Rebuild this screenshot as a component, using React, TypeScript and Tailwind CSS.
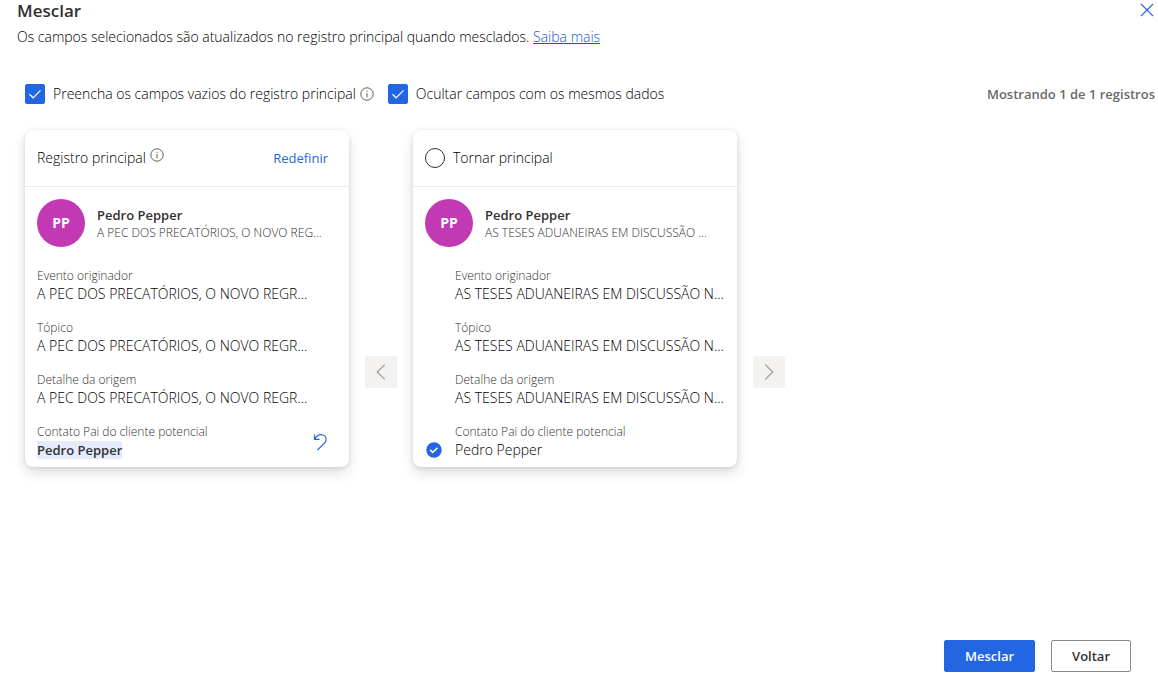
import { useId } from 'react';

interface Field {
  label: string;
  value: string;
}

interface MergeRecord {
  name: string;
  subtitle: string;
  fields: Field[];
}

const primaryRecord: MergeRecord = {
  name: 'Pedro Pepper',
  subtitle: 'A PEC DOS PRECATÓRIOS, O NOVO REG...',
  fields: [
    { label: 'Evento originador', value: 'A PEC DOS PRECATÓRIOS, O NOVO REGR...' },
    { label: 'Tópico', value: 'A PEC DOS PRECATÓRIOS, O NOVO REGR...' },
    { label: 'Detalhe da origem', value: 'A PEC DOS PRECATÓRIOS, O NOVO REGR...' },
  ],
};

const secondaryRecord: MergeRecord = {
  name: 'Pedro Pepper',
  subtitle: 'AS TESES ADUANEIRAS EM DISCUSSÃO ...',
  fields: [
    { label: 'Evento originador', value: 'AS TESES ADUANEIRAS EM DISCUSSÃO N...' },
    { label: 'Tópico', value: 'AS TESES ADUANEIRAS EM DISCUSSÃO N...' },
    { label: 'Detalhe da origem', value: 'AS TESES ADUANEIRAS EM DISCUSSÃO N...' },
  ],
};

function InfoIcon() {
  return (
    <svg viewBox="0 0 14 14" className="w-3.5 h-3.5 shrink-0 text-[#605e5c]" fill="none" stroke="currentColor">
      <circle cx="7" cy="7" r="6.2" strokeWidth="1" />
      <path d="M7 6v4.2M7 3.8v1.1" strokeWidth="1" />
    </svg>
  );
}

function OptionCheckbox({ label }: { label: string }) {
  const id = useId();

  return (
    <div className="flex items-center gap-2">
      <span className="relative flex">
        <input
          id={id}
          type="checkbox"
          defaultChecked
          className="peer appearance-none w-5 h-5 rounded-xs border border-[#323130] checked:border-[#2266e3] checked:bg-[#2266e3]"
        />
        <svg
          viewBox="0 0 20 20"
          className="absolute inset-0 w-5 h-5 pointer-events-none invisible peer-checked:visible"
          fill="none"
          stroke="white"
          strokeWidth="1.2"
        >
          <path d="M4.5 10.3l3.6 3.5 7.4-7.4" />
        </svg>
      </span>
      <label htmlFor={id}>{label}</label>
    </div>
  );
}

function RecordHeading({ record }: { record: MergeRecord }) {
  return (
    <div className="flex items-center gap-3 px-3 pt-3">
      <div className="flex items-center justify-center w-12 h-12 rounded-full bg-[#c239b3] text-white font-bold">
        PP
      </div>
      <div className="whitespace-nowrap">
        <p className="text-[13px] leading-5 font-semibold text-[#323130]">{record.name}</p>
        <p className="text-xs text-[#323130]">{record.subtitle}</p>
      </div>
    </div>
  );
}

function FieldRow({ label, value }: Field) {
  return (
    <div className="whitespace-nowrap">
      <dt className="text-xs text-[#323130]">{label}</dt>
      <dd>{value}</dd>
    </div>
  );
}

function ArrowButton({ direction }: { direction: 'left' | 'right' }) {
  return (
    <button
      type="button"
      aria-label={direction === 'left' ? 'Anterior' : 'Próximo'}
      className="self-end flex items-center justify-center w-8 h-8 mx-4 mb-[79px] rounded-xs bg-[#f3f2f1] text-[#a19f9d]"
    >
      <svg viewBox="0 0 16 16" className="w-4 h-4" fill="none" stroke="currentColor" strokeWidth="1.3">
        <path d={direction === 'left' ? 'M11.7 .6L4.2 8l7.5 7.4' : 'M4.3 .6L11.8 8l-7.5 7.4'} />
      </svg>
    </button>
  );
}

const cardClass =
  'flex flex-col w-81 shrink-0 rounded-lg bg-white pb-[7px] shadow-[0_6px_14px_rgba(0,0,0,0.13),0_1px_4px_rgba(0,0,0,0.11)]';

export default function App() {
  return (
    <div className="flex flex-col min-h-screen bg-white text-black text-sm font-light font-['Open_Sans','Noto_Sans',sans-serif]">
      <header className="flex items-start justify-between pl-[17px]">
        <div>
          <h1 className="text-[17px] leading-[22px] font-semibold text-[#323130]">Mesclar</h1>
          <p className="mt-[5px]">
            Os campos selecionados são atualizados no registro principal quando mesclados.{' '}
            <a href="#saiba-mais" className="text-[#0f55d8] underline">
              Saiba mais
            </a>
          </p>
        </div>
        <button type="button" aria-label="Fechar" className="px-1 py-[3px] text-[#2266e3]">
          <svg viewBox="0 0 14 14" className="w-3.5 h-3.5" fill="none" stroke="currentColor" strokeWidth="1.1">
            <path d="M1 1l12 12M13 1L1 13" />
          </svg>
        </button>
      </header>

      <div className="flex items-center justify-between mt-[37px] pl-[25px] pr-[3px]">
        <div className="flex items-center gap-3.5">
          <div className="flex items-center gap-1">
            <OptionCheckbox label="Preencha os campos vazios do registro principal" />
            <InfoIcon />
          </div>
          <OptionCheckbox label="Ocultar campos com os mesmos dados" />
        </div>
        <span className="text-[13px] leading-5 font-semibold text-[#6b6967]">Mostrando 1 de 1 registros</span>
      </div>

      <main className="flex pl-[25px] mt-[26px]">
        <section className={cardClass}>
          <div className="flex items-center justify-between h-14 box-content px-3 border-b border-[#edebe9]">
            <div className="flex items-start gap-1">
              <span>Registro principal</span>
              <InfoIcon />
            </div>
            <button type="button" className="pr-[9px] text-[13px] leading-5 font-normal text-[#2266e3]">
              Redefinir
            </button>
          </div>
          <RecordHeading record={primaryRecord} />
          <dl className="flex flex-col gap-4 px-3 pt-[21px]">
            {primaryRecord.fields.map((field) => (
              <FieldRow key={field.label} label={field.label} value={field.value} />
            ))}
            <div className="flex items-center justify-between pr-[9px]">
              <div>
                <dt className="text-xs text-[#323130]">Contato Pai do cliente potencial</dt>
                <dd className="text-[13px] leading-5 font-semibold text-[#323130]">
                  <span className="bg-[#e3ebfc]">Pedro Pepper</span>
                </dd>
              </div>
              <button type="button" aria-label="Desfazer" className="text-[#2266e3]">
                <svg viewBox="0 0 16 18" className="w-4 h-[18px]" fill="none" stroke="currentColor" strokeWidth="1.2">
                  <path d="M2.5 1.5v4.8h5M2.7 6.2C4.5 3 6.7 1.6 9.1 1.6c3 0 5 2.2 5 4.8 0 1.7-.7 2.9-1.8 4L5.5 17" />
                </svg>
              </button>
            </div>
          </dl>
        </section>

        <ArrowButton direction="left" />

        <section className={cardClass}>
          <div className="flex items-center gap-2 h-14 box-content px-3 border-b border-[#edebe9]">
            <input
              id="make-primary"
              type="radio"
              name="primary"
              className="appearance-none w-5 h-5 rounded-full border border-[#323130] checked:border-[6px] checked:border-[#2266e3]"
            />
            <label htmlFor="make-primary">Tornar principal</label>
          </div>
          <RecordHeading record={secondaryRecord} />
          <dl className="flex flex-col gap-4 pl-3 pt-[21px]">
            {secondaryRecord.fields.map((field) => (
              <div key={field.label} className="pl-[30px]">
                <FieldRow label={field.label} value={field.value} />
              </div>
            ))}
            <div className="flex items-end gap-3">
              <button type="button" aria-label="Campo selecionado" className="w-[18px] py-px">
                <svg viewBox="0 0 18 18" className="w-[18px] h-[18px]" fill="none">
                  <circle cx="9" cy="9" r="7.7" fill="#2266e3" />
                  <path d="M5.2 8.9l2.6 2.5 4.7-4.6" stroke="white" strokeWidth="1.6" />
                </svg>
              </button>
              <FieldRow label="Contato Pai do cliente potencial" value="Pedro Pepper" />
            </div>
          </dl>
        </section>

        <ArrowButton direction="right" />
      </main>

      <footer className="flex justify-end gap-4 mt-auto pt-6 pr-[27px] pb-[9px] text-[13px] font-semibold">
        <button type="button" className="h-8 px-5 rounded-xs border border-[#2266e3] bg-[#2266e3] text-white">
          Mesclar
        </button>
        <button type="button" className="h-8 px-5 rounded-xs border border-[#8a8886] text-[#323130]">
          Voltar
        </button>
      </footer>
    </div>
  );
}
